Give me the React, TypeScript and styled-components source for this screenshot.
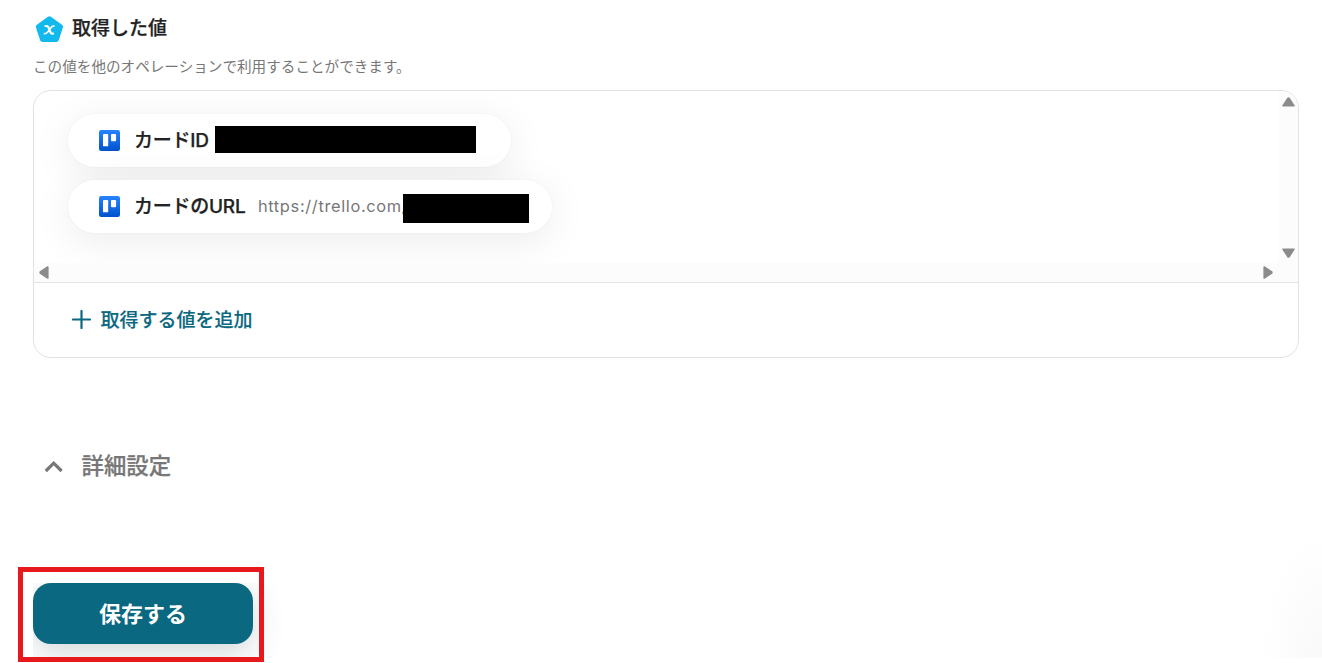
import React from "react";
import styled, { createGlobalStyle } from "styled-components";

const GlobalStyle = createGlobalStyle`
  * {
    box-sizing: border-box;
  }
  body {
    margin: 0;
    background: #fff;
    overflow: hidden;
    font-family: Inter, "Noto Sans CJK JP", sans-serif;
  }
`;

const Page = styled.main`
  position: relative;
  display: flex;
  flex-direction: column;
  align-items: flex-start;
  height: 663px;
  padding: 14px 23px 0 33px;
  overflow: hidden;
  background: #fff;
`;

const CornerGlow = styled.div`
  position: absolute;
  right: 0;
  bottom: 5px;
  width: 60px;
  height: 125px;
  background: radial-gradient(ellipse 60px 125px at 100% 100%, #f9f9f9, #fff);
`;

const Heading = styled.h2`
  display: flex;
  align-items: center;
  gap: 8px;
  height: 29px;
  margin: 0 0 0 2px;
  color: #222;
  font-size: 19px;
  font-weight: 500;
  line-height: 29px;
  -webkit-text-stroke: 0.25px currentColor;
`;

const Description = styled.p`
  height: 22px;
  margin: 13px 0 12px;
  color: #777;
  font-size: 14.6px;
  line-height: 22px;
  white-space: nowrap;
`;

const Panel = styled.section`
  width: 1266px;
  height: 268px;
  border: 1px solid #e2e2e2;
  border-radius: 18px;
  overflow: hidden;
`;

const ScrollArea = styled.div`
  display: grid;
  grid-template-columns: 1fr 19px;
  grid-template-rows: 172px 19px;
  height: 192px;
  border-bottom: 1px solid #e2e2e2;
`;

const ChipList = styled.div`
  display: flex;
  flex-direction: column;
  align-items: flex-start;
  gap: 13px;
  padding: 23px 34px 0;
  overflow: hidden;
`;

const Chip = styled.div<{ $width: number }>`
  position: relative;
  display: flex;
  align-items: center;
  width: ${({ $width }) => $width}px;
  height: 53px;
  padding-left: 31px;
  border-radius: 27px;
  background: #fff;
  box-shadow: 0 8px 40px rgba(0, 0, 0, 0.08), 0 0 2px rgba(0, 0, 0, 0.06);
`;

const ChipLabel = styled.span`
  margin-left: 14px;
  color: #222;
  font-size: 19px;
  font-weight: 500;
  line-height: 28px;
  letter-spacing: -0.25px;
  white-space: nowrap;
  -webkit-text-stroke: 0.25px currentColor;
`;

const ChipValue = styled.span`
  margin: 0 0 1px 12.5px;
  color: #777;
  font-size: 16.4px;
  letter-spacing: 0.66px;
`;

const Redaction = styled.span<{ $left: number; $top: number; $width: number; $height: number }>`
  position: absolute;
  left: ${({ $left }) => $left}px;
  top: ${({ $top }) => $top}px;
  width: ${({ $width }) => $width}px;
  height: ${({ $height }) => $height}px;
  background: #000;
`;

const VerticalBar = styled.div`
  display: flex;
  flex-direction: column;
  align-items: center;
  justify-content: space-between;
  padding: 6px 0 5px;
  background: #fcfcfc;
`;

const HorizontalBar = styled.div`
  display: flex;
  align-items: center;
  justify-content: space-between;
  padding: 0 6px 0 5px;
  background: #fcfcfc;
`;

const BarCorner = styled.div`
  background: #fcfcfc;
`;

const AddButton = styled.button`
  display: flex;
  align-items: center;
  gap: 9.5px;
  height: 72px;
  margin: 0 0 0 38px;
  padding: 0;
  border: 0;
  background: none;
  color: #0b6881;
  font: inherit;
  font-size: 19px;
  font-weight: 500;
  line-height: 28px;
  -webkit-text-stroke: 0.15px currentColor;
`;

const AddLabel = styled.span`
  padding-top: 3px;
`;

const DetailToggle = styled.button`
  display: flex;
  align-items: center;
  gap: 17.5px;
  height: 34px;
  margin: 89px 0 0 11px;
  padding: 0;
  border: 0;
  background: none;
  color: #777;
  font: inherit;
  font-size: 22.4px;
  font-weight: 500;
  -webkit-text-stroke: 0.25px currentColor;
`;

const SaveArea = styled.div`
  position: relative;
  width: 251px;
  height: 75px;
  margin-top: 102px;
`;

const ShadowClip = styled.div`
  height: 75px;
  overflow: hidden;
`;

const SaveButton = styled.button`
  width: 220px;
  height: 61px;
  padding: 0 0 4px;
  border: 0;
  border-radius: 18px;
  background: #0b6881;
  box-shadow: 0 8px 32px rgba(20, 50, 65, 0.2);
  color: #fff;
  font: inherit;
  font-size: 22px;
  font-weight: 700;
`;

const HighlightFrame = styled.div`
  position: absolute;
  left: -15.5px;
  top: -16px;
  width: 246.5px;
  height: 95px;
  border: 5px solid #e8191c;
`;

function PentagonIcon() {
  return (
    <svg width="29" height="28" viewBox="0 0 29 28">
      <path
        d="M14.4 3.8 25.5 11.7 21.4 24.6H7.5L3.3 11.7Z"
        fill="#12b9ed"
        stroke="#12b9ed"
        strokeWidth="5"
        strokeLinejoin="round"
      />
      <path
        d="M10.4 11h1.2c.9 0 1.4.4 1.8 1.2l2.2 5.3c.4.8.8 1.1 1.6 1.1h.9"
        fill="none"
        stroke="#fff"
        strokeWidth="2.2"
        strokeLinecap="round"
      />
      <path
        d="M19 11c-1.7-.2-2.4.6-3.2 1.9l-3 4c-.8 1.2-1.7 1.9-3.3 1.7"
        fill="none"
        stroke="#fff"
        strokeWidth="1.7"
        strokeLinecap="round"
      />
    </svg>
  );
}

function TrelloIcon({ id }: { id: string }) {
  return (
    <svg width="21" height="21" viewBox="0 0 21 21">
      <defs>
        <linearGradient id={id} x1="0" y1="0" x2="0" y2="1">
          <stop offset="0" stopColor="#2684ff" />
          <stop offset="1" stopColor="#0052cc" />
        </linearGradient>
      </defs>
      <rect width="21" height="21" rx="2.2" fill={`url(#${id})`} />
      <rect x="4" y="4" width="5.2" height="12.3" rx="0.9" fill="#fff" />
      <rect x="12" y="4" width="5.1" height="7.2" rx="0.9" fill="#fff" />
    </svg>
  );
}

function ArrowIcon({ angle }: { angle: number }) {
  const sideways = angle % 180 !== 0;
  return (
    <svg
      width={sideways ? 10 : 13}
      height={sideways ? 13 : 10}
      viewBox={sideways ? "-5 -6.5 10 13" : "-6.5 -5 13 10"}
    >
      <path
        d="M-1.2-4.2Q0-5.2 1.2-4.2L5.9 2.9Q6.8 4.6 5.5 4.6H-5.5Q-6.8 4.6-5.9 2.9Z"
        transform={`rotate(${angle})`}
        fill="#8b8b8b"
      />
    </svg>
  );
}

export default function App() {
  return (
    <>
      <GlobalStyle />
      <Page>
        <CornerGlow />
        <Heading>
          <PentagonIcon />
          取得した値
        </Heading>
        <Description>この値を他のオペレーションで利用することができます。</Description>

        <Panel>
          <ScrollArea>
            <ChipList>
              <Chip $width={443}>
                <TrelloIcon id="trello-card" />
                <ChipLabel>カードID</ChipLabel>
                <Redaction $left={147.3} $top={12} $width={261} $height={26.5} />
              </Chip>
              <Chip $width={484}>
                <TrelloIcon id="trello-url" />
                <ChipLabel>カードのURL</ChipLabel>
                <ChipValue>https://trello.com/</ChipValue>
                <Redaction $left={334.7} $top={14.4} $width={126.6} $height={28.5} />
              </Chip>
            </ChipList>
            <VerticalBar>
              <ArrowIcon angle={0} />
              <ArrowIcon angle={180} />
            </VerticalBar>
            <HorizontalBar>
              <ArrowIcon angle={270} />
              <ArrowIcon angle={90} />
            </HorizontalBar>
            <BarCorner />
          </ScrollArea>
          <AddButton>
            <svg width="19" height="19" viewBox="0 0 19 19">
              <path d="M9.5 1v17M1 9.5h17" stroke="currentColor" strokeWidth="2.2" strokeLinecap="round" />
            </svg>
            <AddLabel>取得する値を追加</AddLabel>
          </AddButton>
        </Panel>

        <DetailToggle>
          <svg width="20" height="18" viewBox="0 0 20 18">
            <path d="m1.8 16 7.9-7.8L17.6 16" fill="none" stroke="currentColor" strokeWidth="3.2" />
          </svg>
          詳細設定
        </DetailToggle>

        <SaveArea>
          <ShadowClip>
            <SaveButton>保存する</SaveButton>
          </ShadowClip>
          <HighlightFrame />
        </SaveArea>
      </Page>
    </>
  );
}
